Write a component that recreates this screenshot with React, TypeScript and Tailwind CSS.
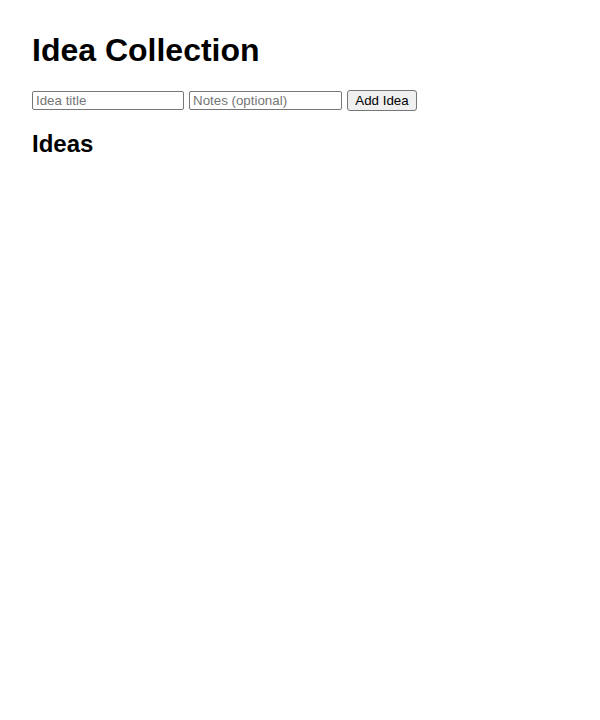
import React, { useState } from 'react';

interface Idea {
  id: number;
  title: string;
  notes: string;
}

export default function App() {
  const [title, setTitle] = useState('');
  const [notes, setNotes] = useState('');
  const [ideas, setIdeas] = useState<Idea[]>([]);

  const addIdea = () => {
    if (!title.trim()) return;
    setIdeas([...ideas, { id: Date.now(), title: title.trim(), notes: notes.trim() }]);
    setTitle('');
    setNotes('');
  };

  return (
    <div className="min-h-[720px] bg-white p-8 text-black font-['Liberation_Sans',Arial,sans-serif]">
      <h1 className="text-[32px] font-bold leading-[37px] mb-[21px]">Idea Collection</h1>

      <div className="flex items-center h-[21px]">
        <input
          className="w-[152px] h-[19px] border border-[#767676] rounded-[2px] px-[3px] text-[13.33px] leading-none placeholder:text-[#757575] outline-none"
          placeholder="Idea title"
          value={title}
          onChange={(e) => setTitle(e.target.value)}
        />
        <input
          className="ml-[5px] w-[153px] h-[19px] border border-[#767676] rounded-[2px] px-[3px] text-[13.33px] leading-none placeholder:text-[#757575] outline-none"
          placeholder="Notes (optional)"
          value={notes}
          onChange={(e) => setNotes(e.target.value)}
        />
        <button
          className="ml-[5px] h-[21px] w-[70px] bg-[#efefef] border border-[#767676] rounded-[3px] text-[13.33px] leading-none"
          onClick={addIdea}
        >
          Add Idea
        </button>
      </div>

      <h2 className="text-[24px] font-bold leading-[28px] mt-[19px] mb-[20px]">Ideas</h2>
      <ul>
        {ideas.map((idea) => (
          <li key={idea.id} className="text-[16px]">
            <strong>{idea.title}</strong>
            {idea.notes && <span> — {idea.notes}</span>}
          </li>
        ))}
      </ul>
    </div>
  );
}
